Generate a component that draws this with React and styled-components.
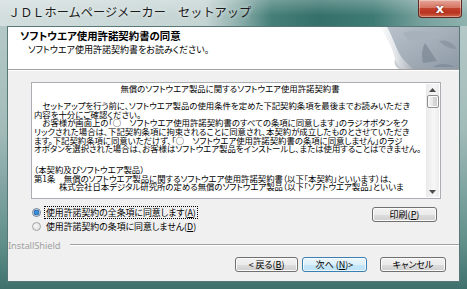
import styled, { createGlobalStyle } from 'styled-components'

const GlobalStyle = createGlobalStyle`
  html, body {
    margin: 0;
    padding: 0;
    background: #ffffff;
  }
  * {
    box-sizing: border-box;
  }
`

const jp = `"Noto Sans CJK JP", "Noto Sans", sans-serif`

const Window = styled.div`
  width: 467px;
  height: 289px;
  display: flex;
  flex-direction: column;
  background: linear-gradient(180deg, #b9cccb 0%, #a2bbb9 45%, #5f8e89 85%, #3f706b 100%);
  font-family: ${jp};
  overflow: hidden;
`

const TitleBar = styled.div`
  height: 26px;
  flex: none;
  display: flex;
  justify-content: space-between;
  align-items: flex-start;
  padding-left: 8px;
  padding-right: 5px;
  background:
    linear-gradient(180deg, rgba(255,255,255,0.25) 0%, rgba(255,255,255,0) 60%),
    linear-gradient(90deg, #d2dedd 0%, #c4d4d3 44%, #8fb0ad 51%, #467f79 58%, #35706a 68%, #3f7b75 80%, #76a09c 90%, #8fb2ae 100%);
`

const Title = styled.div`
  margin-top: 4px;
  font-size: 12.2px;
  line-height: 16px;
  color: #1b1b1b;
  white-space: nowrap;
  text-shadow: 0 0 4px rgba(255, 255, 255, 0.9);
`

const CloseButton = styled.div`
  width: 44px;
  height: 18px;
  display: flex;
  align-items: center;
  justify-content: center;
  border: 1px solid #5b2a22;
  border-top: none;
  border-radius: 0 0 4px 4px;
  background: linear-gradient(180deg, #e4a799 0%, #d77562 45%, #c0412c 50%, #b8331e 75%, #d0694f 100%);
  box-shadow: inset 0 0 0 1px rgba(255, 255, 255, 0.35);
  color: #ffffff;
  font-family: "DejaVu Sans", sans-serif;
  font-weight: bold;
  font-size: 13px;
  line-height: 1;
  text-shadow: 0 0 2px #5b1a10;
`

const Client = styled.div`
  height: 256px;
  flex: none;
  margin: 0 7px;
  display: flex;
  flex-direction: column;
  border: 1px solid #587877;
  background: #f0f0f0;
`

const Header = styled.div`
  height: 43px;
  flex: none;
  display: flex;
  justify-content: space-between;
  background: #ffffff;
  border-bottom: 1px solid #a0a0a0;
  box-shadow: 0 1px 0 #ffffff;
`

const HeaderText = styled.div`
  padding: 2px 0 0 12px;
  font-feature-settings: "palt" 1;
  color: #000000;
`

const HeaderTitle = styled.div`
  font-size: 10.4px;
  font-weight: bold;
  line-height: 13px;
`

const HeaderSub = styled.div`
  margin-top: 1px;
  padding-left: 8px;
  font-size: 9px;
  line-height: 13px;
`

const Body = styled.div`
  padding: 12px 18px 0 23px;
`

const LicenseBox = styled.div`
  height: 117px;
  display: flex;
  border: 1px solid #abadb3;
  background: #ffffff;
`

const LicenseText = styled.div`
  flex: 1;
  overflow: hidden;
  padding: 1px 0 0 2px;
  font-size: 8.4px;
  line-height: 8.6px;
  font-feature-settings: "palt" 1;
  color: #000000;
`

const Line = styled.div`
  white-space: nowrap;
  text-align: ${p => (p.$center ? 'center' : 'left')};
  padding-left: ${p => p.$indent || 0}px;
`

const Blank = styled.div`
  height: ${p => p.$h}px;
`

const ScrollBar = styled.div`
  width: 13px;
  flex: none;
  margin: 1px 1px 1px 0;
  display: flex;
  flex-direction: column;
  align-items: center;
  background: linear-gradient(90deg, #e9e9e9, #f7f7f7 60%, #ececec);
`

const Arrow = styled.div`
  height: 11px;
  width: 13px;
  display: flex;
  align-items: center;
  justify-content: center;
`

const Thumb = styled.div`
  width: 12px;
  height: 13px;
  border: 1px solid #8f8f8f;
  border-radius: 2px;
  background: linear-gradient(90deg, #f3f3f3 0%, #e8e8e8 50%, #d8d8d8 51%, #cfcfcf 100%);
  box-shadow: inset 0 0 0 1px #fbfbfb;
`

const Track = styled.div`
  flex: 1;
`

const OptionsRow = styled.div`
  margin-top: 6px;
  display: flex;
  justify-content: space-between;
  align-items: flex-start;
  padding: 0 4px 0 1px;
`

const Radios = styled.div`
  display: flex;
  flex-direction: column;
`

const RadioRow = styled.div`
  height: 14px;
  display: flex;
  align-items: center;
  gap: 3px;
`

const RadioCircle = styled.div`
  width: 9px;
  height: 9px;
  flex: none;
  border-radius: 50%;
  border: 1px solid ${p => (p.$on ? '#6f7f92' : '#a5a5a5')};
  background: ${p => (p.$on
    ? 'radial-gradient(circle, #3d8ed8 0 1.6px, #1a5fa8 2.6px, #dfe9f3 3.2px, #f4f4f4 100%)'
    : 'radial-gradient(circle at 40% 40%, #f7f7f7, #dadada)')};
`

const RadioLabel = styled.div`
  font-size: 8.9px;
  line-height: 11px;
  padding: 0 1px;
  white-space: nowrap;
  font-feature-settings: "palt" 1;
  color: #000000;
  border: 1px dotted ${p => (p.$focus ? '#000000' : 'transparent')};
`

const Key = styled.span`
  text-decoration: underline;
`

const Button = styled.div`
  width: ${p => p.$w}px;
  height: 15px;
  display: flex;
  align-items: center;
  justify-content: center;
  border: 1px solid ${p => (p.$default ? '#3c7fb1' : '#707070')};
  border-radius: 3px;
  background: ${p => (p.$default
    ? 'linear-gradient(180deg, #ecf6fc 0%, #dcf0fb 50%, #c6e6f8 51%, #bde2f6 100%)'
    : 'linear-gradient(180deg, #f2f2f2 0%, #ebebeb 50%, #dddddd 51%, #cfcfcf 100%)')};
  box-shadow: inset 0 0 0 1px ${p => (p.$default ? 'rgba(255,255,255,0.7)' : '#fbfbfb')};
  font-size: 9px;
  line-height: 1;
  font-feature-settings: "palt" 1;
  color: #000000;
  white-space: nowrap;
`

const PrintButton = styled(Button)`
  margin-top: 2px;
`

const BrandRow = styled.div`
  margin-top: 6px;
  height: 12px;
  display: flex;
  align-items: center;
  gap: 10px;
`

const Brand = styled.div`
  font-family: "Noto Sans", "Liberation Sans", sans-serif;
  font-size: 9.4px;
  color: #a2a2a2;
  letter-spacing: -0.1px;
`

const Rule = styled.div`
  flex: 1;
  height: 2px;
  border-top: 1px solid #a0a0a0;
  border-bottom: 1px solid #ffffff;
`

const ButtonRow = styled.div`
  margin-top: 6px;
  display: flex;
  justify-content: flex-end;
  padding-right: 13px;
`

const NavGroup = styled.div`
  display: flex;
  gap: 4px;
  margin-right: 13px;
`

const HeaderArt = () => (
  <svg width="86" height="42" viewBox="0 0 86 42">
    <defs>
      <linearGradient id="bg" x1="0" y1="0" x2="1" y2="1">
        <stop offset="0" stopColor="#b9c2cb" />
        <stop offset="1" stopColor="#8e9aa6" />
      </linearGradient>
      <linearGradient id="curl" x1="0" y1="0" x2="1" y2="0">
        <stop offset="0" stopColor="#ffffff" />
        <stop offset="0.5" stopColor="#e2e5e8" />
        <stop offset="1" stopColor="#a9b0b8" />
      </linearGradient>
    </defs>
    <path d="M14 0 H86 V42 H36 C26 34 24 20 14 0 Z" fill="url(#bg)" />
    <path d="M30 6 C40 2 56 4 70 10 C60 12 46 12 36 14 Z" fill="#a7b1bb" />
    <path d="M52 16 L64 34 L50 36 C48 28 49 22 52 16 Z" fill="#7f8b97" opacity="0.8" />
    <path d="M66 14 C74 12 80 16 84 22 C78 22 72 20 66 14 Z" fill="#8994a0" opacity="0.8" />
    <path d="M60 40 C66 36 74 36 82 40 Z" fill="#7c8894" opacity="0.7" />
    <path d="M6 0 H14 C22 14 24 28 34 36 C36 38 38 40 40 42 H32 C26 40 24 38 22 32 C20 22 14 10 6 0 Z" fill="url(#curl)" />
    <path d="M22 32 C24 38 28 41 34 42 H26 C22 40 21 36 22 32 Z" fill="#c9ced3" />
  </svg>
)

const UpArrow = () => (
  <svg width="7" height="4" viewBox="0 0 7 4">
    <path d="M0 4 L3.5 0 L7 4 Z" fill="#4d4d4d" />
  </svg>
)

const DownArrow = () => (
  <svg width="7" height="4" viewBox="0 0 7 4">
    <path d="M0 0 L3.5 4 L7 0 Z" fill="#4d4d4d" />
  </svg>
)

export default function App() {
  return (
    <>
      <GlobalStyle />
      <Window>
        <TitleBar>
          <Title>ＪＤＬホームページメーカー　セットアップ</Title>
          <CloseButton>x</CloseButton>
        </TitleBar>
        <Client>
          <Header>
            <HeaderText>
              <HeaderTitle>ソフトウエア使用許諾契約書の同意</HeaderTitle>
              <HeaderSub>ソフトウエア使用許諾契約書をお読みください。</HeaderSub>
            </HeaderText>
            <HeaderArt />
          </Header>
          <Body>
            <LicenseBox>
              <LicenseText>
                <Line $center>無償のソフトウエア製品に関するソフトウエア使用許諾契約書</Line>
                <Blank $h={8.6} />
                <Line>　セットアップを行う前に、ソフトウエア製品の使用条件を定めた下記契約条項を最後までお読みいただき</Line>
                <Line>内容を十分にご確認ください。</Line>
                <Line>　お客様が画面上の「○　ソフトウエア使用許諾契約書のすべての条項に同意します」のラジオボタンをク</Line>
                <Line>リックされた場合は、下記契約条項に拘束されることに同意され、本契約が成立したものとさせていただき</Line>
                <Line>ます。下記契約条項に同意いただけず、「○　ソフトウエア使用許諾契約書の条項に同意しません」のラジ</Line>
                <Line>オボタンを選択された場合は、お客様はソフトウエア製品をインストールし、または使用することはできません。</Line>
                <Blank $h={12.2} />
                <Line>（本契約及びソフトウエア製品）</Line>
                <Line>第1条　無償のソフトウエア製品に関するソフトウエア使用許諾契約書（以下「本契約」といいます）は、</Line>
                <Line $indent={25}>株式会社日本デジタル研究所の定める無償のソフトウエア製品（以下「ソフトウエア製品」といいま</Line>
              </LicenseText>
              <ScrollBar>
                <Arrow><UpArrow /></Arrow>
                <Thumb />
                <Track />
                <Arrow><DownArrow /></Arrow>
              </ScrollBar>
            </LicenseBox>
            <OptionsRow>
              <Radios>
                <RadioRow>
                  <RadioCircle $on />
                  <RadioLabel $focus>使用許諾契約の全条項に同意します(<Key>A</Key>)</RadioLabel>
                </RadioRow>
                <RadioRow>
                  <RadioCircle />
                  <RadioLabel>使用許諾契約の条項に同意しません(<Key>D</Key>)</RadioLabel>
                </RadioRow>
              </Radios>
              <PrintButton $w={65}>印刷(<Key>P</Key>)</PrintButton>
            </OptionsRow>
          </Body>
          <BrandRow>
            <Brand>InstallShield</Brand>
            <Rule />
          </BrandRow>
          <ButtonRow>
            <NavGroup>
              <Button $w={63}>&lt; 戻る(<Key>B</Key>)</Button>
              <Button $w={65} $default>次へ (<Key>N</Key>)&gt;</Button>
            </NavGroup>
            <Button $w={66}>キャンセル</Button>
          </ButtonRow>
        </Client>
      </Window>
    </>
  )
}
